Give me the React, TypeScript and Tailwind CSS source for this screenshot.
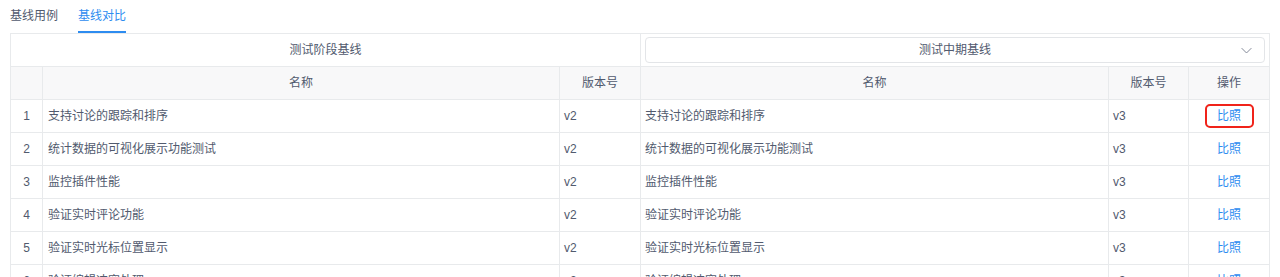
import React, { useState } from 'react';

interface Row {
  id: number;
  name: string;
  version: string;
  compareName: string;
  compareVersion: string;
}

const rows: Row[] = [
  { id: 1, name: '支持讨论的跟踪和排序', version: 'v2', compareName: '支持讨论的跟踪和排序', compareVersion: 'v3' },
  { id: 2, name: '统计数据的可视化展示功能测试', version: 'v2', compareName: '统计数据的可视化展示功能测试', compareVersion: 'v3' },
  { id: 3, name: '监控插件性能', version: 'v2', compareName: '监控插件性能', compareVersion: 'v3' },
  { id: 4, name: '验证实时评论功能', version: 'v2', compareName: '验证实时评论功能', compareVersion: 'v3' },
  { id: 5, name: '验证实时光标位置显示', version: 'v2', compareName: '验证实时光标位置显示', compareVersion: 'v3' },
  { id: 6, name: '验证编辑冲突处理', version: 'v2', compareName: '验证编辑冲突处理', compareVersion: 'v3' },
];

const cell = 'border border-[#e8eaec] h-[33px] p-0';

const App = () => {
  const [tab, setTab] = useState('compare');

  return (
    <div
      className="min-h-screen bg-white text-[12px] text-[#515a6e]"
      style={{ fontFamily: '"Liberation Sans", "Noto Sans CJK SC", sans-serif' }}
    >
      <div className="flex gap-5 px-[10px] h-[33px]">
        <button
          onClick={() => setTab('cases')}
          className={`h-full border-b-2 ${tab === 'cases' ? 'border-[#2d8cf0] text-[#2d8cf0]' : 'border-transparent'}`}
        >
          基线用例
        </button>
        <button
          onClick={() => setTab('compare')}
          className={`h-full border-b-2 ${tab === 'compare' ? 'border-[#2d8cf0] text-[#2d8cf0]' : 'border-transparent'}`}
        >
          基线对比
        </button>
      </div>

      <div className="px-[10px] pr-[11px]">
        <table className="w-full table-fixed border-collapse">
          <colgroup>
            <col className="w-[32px]" />
            <col className="w-[517px]" />
            <col className="w-[81px]" />
            <col className="w-[468px]" />
            <col className="w-[80px]" />
            <col className="w-[81px]" />
          </colgroup>
          <thead>
            <tr>
              <th colSpan={3} className={`${cell} font-normal text-center`}>
                测试阶段基线
              </th>
              <th colSpan={3} className={`${cell} font-normal px-1`}>
                <div className="relative flex items-center justify-center h-[26px] border border-[#e3e5e8] rounded-[4px]">
                  <span>测试中期基线</span>
                  <svg
                    className="absolute right-[11px]"
                    width="13"
                    height="13"
                    viewBox="0 0 12 12"
                    fill="none"
                    stroke="#808695"
                    strokeWidth="0.9"
                  >
                    <path d="M1.5 3.8 L6 8.3 L10.5 3.8" />
                  </svg>
                </div>
              </th>
            </tr>
            <tr className="bg-[#f8f8f9]">
              <th className={cell}></th>
              <th className={`${cell} font-normal text-center`}>名称</th>
              <th className={`${cell} font-normal text-center`}>版本号</th>
              <th className={`${cell} font-normal text-center`}>名称</th>
              <th className={`${cell} font-normal text-center`}>版本号</th>
              <th className={`${cell} font-normal text-center`}>操作</th>
            </tr>
          </thead>
          <tbody>
            {rows.map((row, i) => (
              <tr key={row.id}>
                <td className={`${cell} text-center`}>{row.id}</td>
                <td className={`${cell} pl-[5px]`}>{row.name}</td>
                <td className={`${cell} pl-[4px]`}>{row.version}</td>
                <td className={`${cell} pl-[4px]`}>{row.compareName}</td>
                <td className={`${cell} pl-[4px]`}>{row.compareVersion}</td>
                <td className={`${cell} text-center`}>
                  <span
                    className={`inline-flex items-center justify-center text-[#2d8cf0] ${
                      i === 0 ? 'w-[49px] h-[24px] border-[2.5px] border-[#f0231a] rounded-[5px]' : ''
                    }`}
                  >
                    比照
                  </span>
                </td>
              </tr>
            ))}
          </tbody>
        </table>
      </div>
    </div>
  );
};

export default App;
